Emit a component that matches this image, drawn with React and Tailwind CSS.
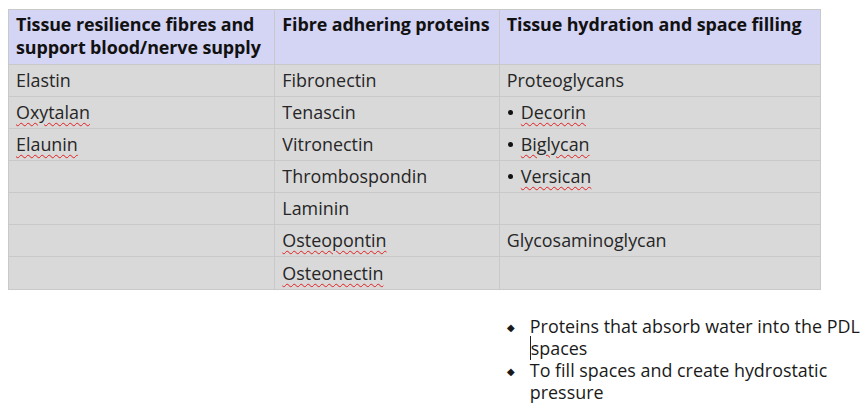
import React from "react";

const sq = "underline decoration-wavy decoration-[#e02020] decoration-1 underline-offset-[3px]";

function Cell({ children, w, className = "" }) {
  return (
    <div className={`${w} border-r border-[#c9c9c9] last:border-r-0 pl-[7px] flex items-center ${className}`}>
      {children}
    </div>
  );
}

const rows = [
  [{ t: "Elastin" }, { t: "Fibronectin" }, { t: "Proteoglycans" }],
  [{ t: "Oxytalan", s: 1 }, { t: "Tenascin" }, { t: "Decorin", s: 1, b: 1 }],
  [{ t: "Elaunin", s: 1 }, { t: "Vitronectin" }, { t: "Biglycan", s: 1, b: 1 }],
  [{ t: "" }, { t: "Thrombospondin" }, { t: "Versican", s: 1, b: 1 }],
  [{ t: "" }, { t: "Laminin" }, { t: "" }],
  [{ t: "" }, { t: "Osteopontin", s: 1 }, { t: "Glycosaminoglycan" }],
  [{ t: "" }, { t: "Osteonectin", s: 1 }, { t: "" }],
];

const widths = ["w-[267px]", "w-[225px]", "w-[321px]"];

function Content({ c }) {
  if (!c.t) return null;
  const txt = <span className={c.s ? sq : ""}>{c.t}</span>;
  if (c.b)
    return (
      <span className="flex items-center">
        <span className="w-[5px] h-[5px] rounded-full bg-[#111] ml-[1px] mr-[8px] mt-[1px]" />
        {txt}
      </span>
    );
  return txt;
}

export default function App() {
  return (
    <div
      className="w-[867px] h-[408px] bg-white overflow-hidden text-[#262626] relative"
      style={{ fontFamily: '"Open Sans", "Noto Sans", sans-serif' }}
    >
      <div className="pt-[9px] pl-[8px]">
        <div className="w-[813px] border border-[#c9c9c9] text-[17.9px]">
          <div className="flex h-[55px] bg-[#d4d4f4] border-b border-[#c9c9c9] font-bold text-[#111] leading-[23px] tracking-[-0.1px]">
            <Cell w={widths[0]} className="!items-start pt-[3px]">
              <span>Tissue resilience fibres and support blood/nerve supply</span>
            </Cell>
            <Cell w={widths[1]} className="!items-start pt-[3px]">
              <span>Fibre adhering proteins</span>
            </Cell>
            <Cell w={widths[2]} className="!items-start pt-[3px]">
              <span>Tissue hydration and space filling</span>
            </Cell>
          </div>
          {rows.map((r, i) => (
            <div
              key={i}
              className={`flex h-[32px] bg-[#d9d9d9] ${i < rows.length - 1 ? "border-b border-[#c9c9c9]" : ""}`}
            >
              {r.map((c, j) => (
                <Cell key={j} w={widths[j]}>
                  <Content c={c} />
                </Cell>
              ))}
            </div>
          ))}
        </div>
      </div>
      <ul className="ml-[505px] mt-[25px] text-[17.9px] leading-[22px] text-[#1a1a1a]">
        <li className="flex">
          <span className="w-[25px] text-[10px] pl-[2px] leading-[24px]">◆</span>
          <span className="w-[340px]">
            Proteins that absorb water into the PDL <span className="border-l border-[#222]">spaces</span>
          </span>
        </li>
        <li className="flex">
          <span className="w-[25px] text-[10px] pl-[2px] leading-[24px]">◆</span>
          <span className="w-[340px]">To fill spaces and create hydrostatic pressure</span>
        </li>
      </ul>
    </div>
  );
}
